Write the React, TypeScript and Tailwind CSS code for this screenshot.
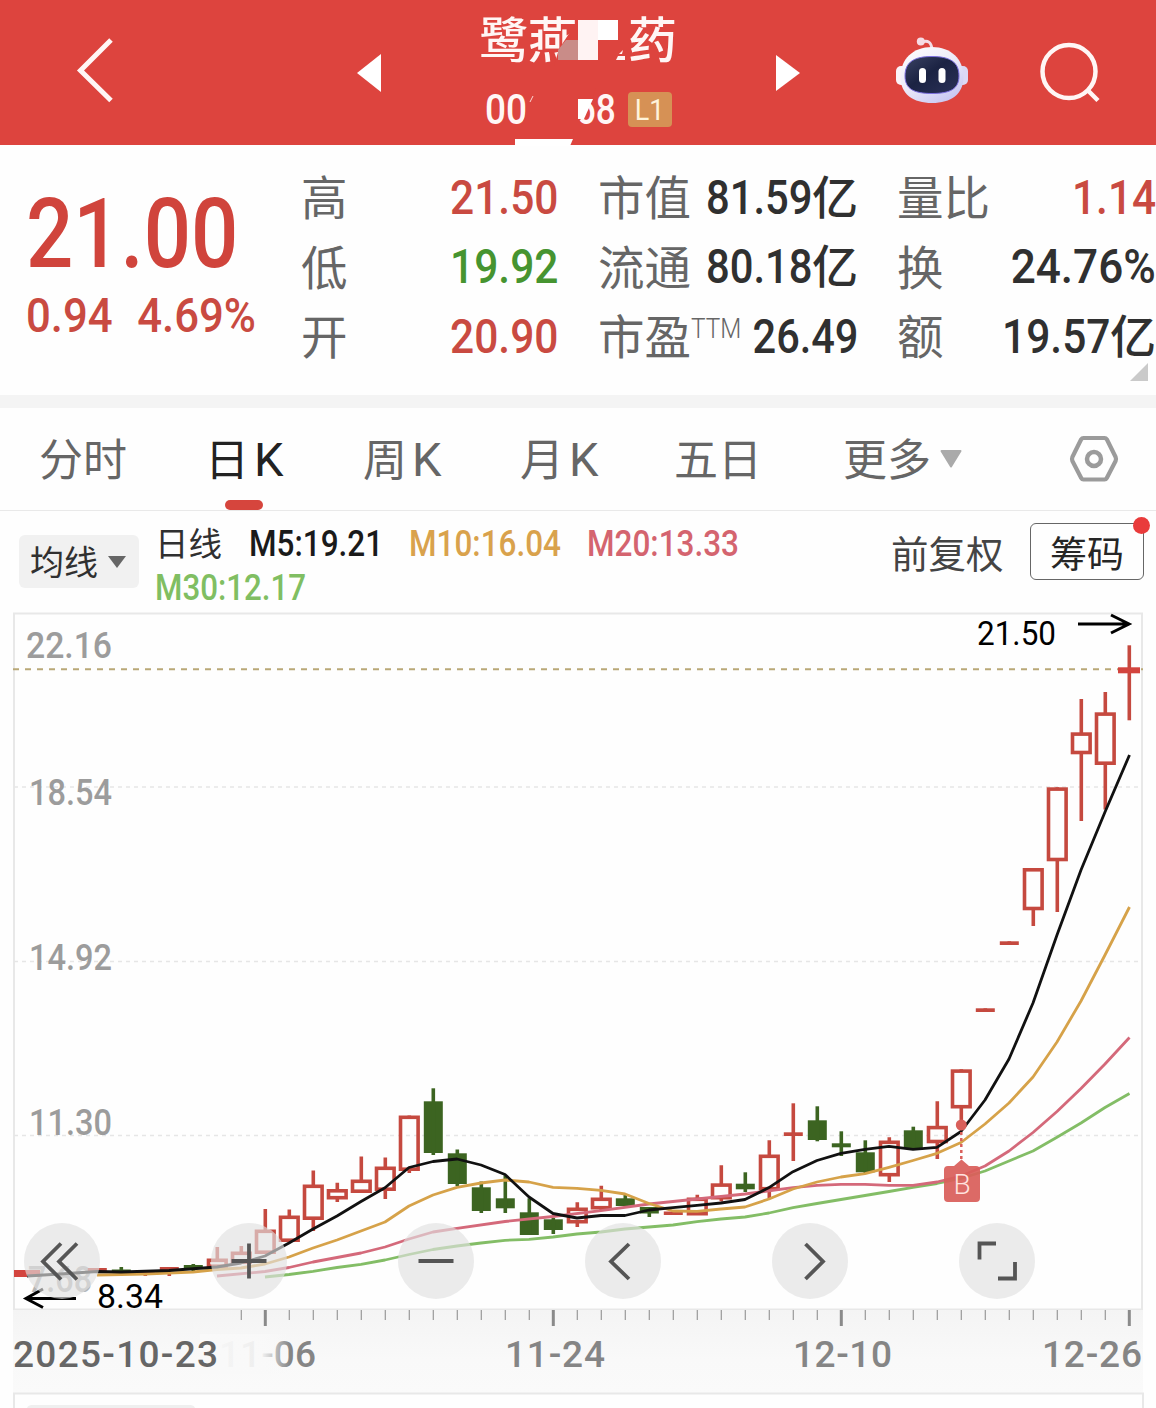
import { clsx } from 'clsx'

type Point = [number, number]

interface Candle {
  x: number
  top: number
  bottom: number
  high: number
  low: number
  up: boolean
}

const RED = '#c5493f'
const GREEN = '#3c6421'

const c = (x: number, top: number, bottom: number, high: number, low: number, up = true): Candle => ({
  x,
  top,
  bottom,
  high,
  low,
  up
})

const candles: Candle[] = [
  c(97.3, 1268, 1272, 1268, 1272),
  c(121.3, 1269.5, 1272.5, 1267, 1275, false),
  c(145.3, 1270, 1273, 1270, 1276),
  c(169.3, 1267, 1270.5, 1267, 1276),
  c(193.3, 1265, 1268, 1264, 1271, false),
  c(217.3, 1258.5, 1268, 1247, 1268),
  c(241.3, 1251.5, 1264, 1246, 1264),
  c(265.3, 1229.5, 1254, 1209, 1254),
  c(289.3, 1215.5, 1242, 1209.5, 1242),
  c(313.3, 1184.5, 1220, 1170.5, 1231),
  c(337.3, 1189, 1199.5, 1182.7, 1202),
  c(361.3, 1179.5, 1193, 1156.5, 1193),
  c(385.3, 1166.5, 1191, 1157.5, 1199),
  c(409.3, 1115.5, 1171, 1115.5, 1173),
  c(433.3, 1101.3, 1153, 1088.3, 1155, false),
  c(457.3, 1153.3, 1184, 1149.5, 1186, false),
  c(481.3, 1187.3, 1211, 1181.5, 1213, false),
  c(505.3, 1198.3, 1208.3, 1175.3, 1213, false),
  c(529.3, 1212.3, 1235, 1198.3, 1235, false),
  c(553.3, 1219.3, 1230, 1218, 1234, false),
  c(577.3, 1207.5, 1223.5, 1202.3, 1227),
  c(601.3, 1197.5, 1209.5, 1185.7, 1210),
  c(625.3, 1198.3, 1206, 1195, 1206, false),
  c(649.3, 1207, 1213.5, 1207, 1217, false),
  c(673.3, 1211.5, 1215, 1211.5, 1215),
  c(697.3, 1197.5, 1215.5, 1194.7, 1215),
  c(721.3, 1183.3, 1199.5, 1165.3, 1201.5),
  c(745.3, 1183.7, 1189.3, 1172.3, 1192, false),
  c(769.3, 1154.5, 1190.5, 1140.3, 1198),
  c(793.3, 1132.3, 1136, 1103.3, 1161),
  c(817.3, 1120.3, 1140, 1106.3, 1141.3, false),
  c(841.3, 1143.3, 1147.3, 1131.3, 1156, false),
  c(865.3, 1152.3, 1172.3, 1140.3, 1173, false),
  c(889.3, 1140.5, 1176.5, 1137.3, 1182),
  c(913.3, 1130.3, 1149, 1126.7, 1150, false),
  c(937.3, 1125.8, 1143.3, 1101.3, 1159),
  c(961.3, 1069.3, 1108.5, 1069.3, 1124),
  c(985.3, 1008.3, 1012, 1008.3, 1012),
  c(1009.3, 941.3, 945, 941.3, 945),
  c(1033.3, 868, 910.3, 868, 926),
  c(1057.3, 787.3, 861.3, 787.3, 912),
  c(1081.3, 732.3, 754.3, 699, 821),
  c(1105.3, 712.3, 765, 692, 809.5)
]

const ma5: Point[] = [
  [27, 1276], [60, 1274], [97, 1271.5], [121, 1272], [169, 1270.5], [217, 1267], [241, 1263], [265, 1256], [289, 1243],
  [313, 1229], [337, 1216], [361, 1201.5], [385, 1187.7], [409, 1167.5], [433, 1161.5], [457, 1159], [481, 1165],
  [505, 1174.5], [529, 1197], [553, 1213.5], [577, 1218], [601, 1215.5], [625, 1215.5], [649, 1210], [673, 1207.6],
  [697, 1205.3], [721, 1203], [745, 1199.5], [769, 1187.6], [793, 1171.7], [817, 1160.5], [841, 1153.3], [865, 1149.3],
  [889, 1146.3], [913, 1149.3], [937, 1147.3], [961, 1131.5], [985, 1100], [1009, 1059], [1033, 1003], [1057, 935],
  [1081, 870], [1105, 812], [1129.5, 755]
]

const ma10: Point[] = [
  [97, 1275], [145, 1274], [193, 1272], [217, 1269.5], [241, 1268], [265, 1264], [289, 1257], [313, 1248], [337, 1240],
  [361, 1231], [385, 1222], [409, 1206], [433, 1195], [457, 1187.3], [481, 1183], [505, 1180], [529, 1182],
  [553, 1187.3], [577, 1188.3], [601, 1190.3], [625, 1194], [649, 1203.5], [673, 1211], [697, 1211.3], [721, 1209],
  [745, 1207], [769, 1199], [793, 1189], [817, 1182], [841, 1177], [865, 1173.7], [889, 1167.3], [913, 1160.5],
  [937, 1153.3], [961, 1142.5], [985, 1124], [1009, 1103], [1033, 1077], [1057, 1042], [1081, 1001], [1105, 955],
  [1129.5, 907]
]

const ma20: Point[] = [
  [217, 1276], [265, 1271.5], [289, 1267.5], [313, 1262], [337, 1257.5], [361, 1253], [385, 1247], [409, 1239],
  [433, 1232], [457, 1228.3], [505, 1221.5], [553, 1216.5], [601, 1210.7], [649, 1204], [697, 1199], [745, 1194],
  [793, 1187.7], [817, 1185.3], [841, 1184.3], [865, 1184.3], [889, 1185.3], [913, 1185.3], [937, 1182], [961, 1176],
  [985, 1166], [1009, 1151], [1033, 1132.5], [1057, 1111.5], [1081, 1088.5], [1105, 1064], [1129.5, 1037.5]
]

const ma30: Point[] = [
  [265, 1277], [289, 1274.5], [313, 1271.3], [337, 1267.5], [361, 1264.3], [385, 1260], [409, 1254.5], [433, 1249.5],
  [457, 1246], [481, 1243], [505, 1240.3], [529, 1239.3], [553, 1237], [577, 1234], [601, 1232], [625, 1229],
  [649, 1227], [673, 1225], [697, 1221.7], [721, 1219], [745, 1217], [769, 1213], [793, 1207.7], [817, 1203.5],
  [841, 1199.5], [865, 1195.5], [889, 1191.5], [913, 1187.3], [937, 1183.5], [961, 1178.5], [985, 1171], [1009, 1161],
  [1033, 1151], [1057, 1137.3], [1081, 1123], [1105, 1107.5], [1129.5, 1093.5]
]

const toPoints = (points: Point[]) => points.map((p) => p.join(',')).join(' ')

const BackIcon = () => (
  <svg className="h-[72px] w-10" viewBox="0 0 40 72" fill="none" stroke="#fff6f5" strokeWidth="5">
    <path d="M36 6 5.500 36.500 36 66.500" />
  </svg>
)

const RobotIcon = () => (
  <svg className="h-[68px] w-[74px]" viewBox="0 0 74 68">
    <defs>
      <linearGradient id="shell" x1="0" y1="0" x2="0.7" y2="1">
        <stop offset="0" stopColor="#ffffff" />
        <stop offset="0.55" stopColor="#eceaf8" />
        <stop offset="1" stopColor="#c9c8f2" />
      </linearGradient>
      <linearGradient id="visor" x1="0" y1="0" x2="1" y2="1">
        <stop offset="0" stopColor="#3a4263" />
        <stop offset="0.45" stopColor="#1b2343" />
        <stop offset="1" stopColor="#2b3158" />
      </linearGradient>
    </defs>
    <path d="M27 6c6-2 9 0 10 7" fill="none" stroke="#f3dce6" strokeWidth="3" />
    <circle cx="25.800" cy="5.500" r="4" fill="#f6dbe4" />
    <rect x="1" y="30" width="12" height="19" rx="5" fill="#fbf3f8" />
    <rect x="61" y="30" width="12" height="19" rx="5" fill="#dcd8f4" />
    <path
      d="M37 11C56 11 68.500 23 68.500 41 68.500 58 56 67 37 67S5.500 58 5.500 41C5.500 23 18 11 37 11Z"
      fill="url(#shell)"
    />
    <path
      d="M37 20.500C55 20.500 64 26 64 40 64 53 55 57.500 37 57.500S10 53 10 40C10 26 19 20.500 37 20.500Z"
      fill="url(#visor)"
      stroke="#7c6fe0"
      strokeWidth="1"
    />
    <rect x="24" y="32" width="7" height="15" rx="3.500" fill="#fff" />
    <rect x="43.500" y="32" width="7" height="15" rx="3.500" fill="#fff" />
  </svg>
)

const SearchIcon = () => (
  <svg className="h-[64px] w-[64px]" viewBox="0 0 64 64" fill="none" stroke="#fff6f5" strokeWidth="4.500">
    <circle cx="31" cy="31.500" r="26.500" />
    <path d="m49.500 50 10.500 10.500" />
  </svg>
)

const SettingIcon = () => (
  <svg className="h-12 w-[52px]" viewBox="0 0 52 48" fill="none" stroke="#9b9b9b" strokeLinejoin="round">
    <path
      d="M15.500 3h21q1.500 0 2.300 1.300L47.600 22q.8 2 0 4L38.800 43q-.8 1.500-2.300 1.500h-21q-1.500 0-2.300-1.500L4.400 26q-.8-2 0-4L13.200 4.300Q14 3 15.500 3Z"
      strokeWidth="4.200"
    />
    <circle cx="26" cy="24" r="7" strokeWidth="4.500" />
  </svg>
)

const Header = () => (
  <header className="relative flex h-[145px] items-start bg-[#dd443e] text-[#fff6f5]">
    <button className="ml-[75px] mt-[34px]">
      <BackIcon />
    </button>
    <svg className="ml-[242px] mt-[54px] h-[38px] w-6" viewBox="0 0 24 38" fill="#fff">
      <path d="M0 19 24 0v38z" />
    </svg>
    <div className="ml-[98px] w-[200px]">
      <div className="flex h-[72px] justify-between pr-[2px] text-[49px] leading-[73px] font-medium">
        <span>鹭燕</span>
        <span>药</span>
      </div>
      <div className="mt-[13px] flex h-[50px] items-center pl-[6px] font-[Roboto] text-[42px] leading-[50px] font-medium">
        <span className="w-[46px] origin-left scale-x-[0.88]">00</span>
        <span className="ml-[38px] w-[42px] origin-right scale-x-[0.84] text-right">68</span>
        <span className="ml-[17px] mt-[-1px] flex h-[35px] w-11 shrink-0 items-center justify-center rounded-[4px] bg-[#d69155] text-[30px] font-normal text-[#fff3da]">
          <span className="mt-px scale-x-90">L1</span>
        </span>
      </div>
    </div>
    <svg className="ml-[97px] mt-[55px] h-9 w-6" viewBox="0 0 24 36" fill="#fff">
      <path d="M24 18 0 0v36z" />
    </svg>
    <button className="ml-[95px] mt-[36px]">
      <RobotIcon />
    </button>
    <button className="ml-[68.500px] mt-[40px]">
      <SearchIcon />
    </button>
    {/* mosaic over part of the name and the code */}
    <svg className="absolute left-[510px] top-0 h-[146px] w-[120px]" viewBox="510 0 120 146">
      <path d="M570 32h12v34h-28l5-17z" fill="#dd443e" />
      <path d="M558 60V50l8-10h12v20z" fill="#c98c88" />
      <path d="M578 20h20v40h-20z" fill="#fff3f3" />
      <path d="M598 20h20v20h-20z" fill="#fff" />
      <path d="m616 60 2-4h7v4zM619 54l4-4-1 4z" fill="#fff3f3" />
      <path d="M527 92h51v34h-57l4-9 2-10z" fill="#dd443e" />
      <path d="m530 102 3-6" stroke="#fbd5d2" />
      <path d="M576 88h20l-5 14-7 14-8 8z" fill="#dd443e" />
      <path d="M578 99h15l-9 20h-6z" fill="#fff" />
      <path d="M515 139h58l-3 7h-55z" fill="#fff" />
    </svg>
  </header>
)

interface StatProps {
  label: string
  sup?: string
  value: string
  unit?: string
  color?: string
  stretch?: string
}

const Stat = ({ label, sup, value, unit, color = 'text-[#303030]', stretch = 'scale-x-[0.885]' }: StatProps) => (
  <div className="flex h-[69.500px] items-center justify-between">
    <span className="mt-[-5px] flex text-[46.500px] text-[#666]">
      {label}
      {sup && (
        <span className="w-[50px] origin-left scale-x-[0.9] font-[Roboto] text-[27px] leading-[61px] font-light">
          {sup}
        </span>
      )}
    </span>
    <span className={clsx('flex items-center whitespace-nowrap', color)}>
      <span className={clsx('-ml-4 origin-right font-[Roboto] text-[48px] font-medium', stretch)}>{value}</span>
      {unit && <span className="mt-[-7px] text-[46px] font-medium">{unit}</span>}
    </span>
  </div>
)

const Quote = () => (
  <section className="relative flex h-[250px] pt-[18px]">
    <div className="w-[301px] pl-[26px] text-[#d0443c]">
      <div className="mt-[15px] h-[112px] origin-left scale-x-[0.867] font-[Roboto] text-[96px] leading-[112px] font-medium">
        21.00
      </div>
      <div className="mt-[-2px] flex h-14 origin-left scale-x-[0.91] gap-[27px] font-[Roboto] text-[48px] leading-[56px] font-medium text-[#c94a41]">
        <span>0.94</span>
        <span>4.69%</span>
      </div>
    </div>
    <div className="w-[257px]">
      <Stat label="高" value="21.50" color="text-[#c94a41]" />
      <Stat label="低" value="19.92" color="text-[#469430]" />
      <Stat label="开" value="20.90" color="text-[#c94a41]" />
    </div>
    <div className="ml-10 w-[260px]">
      <Stat label="市值" value="81.59" unit="亿" stretch="scale-x-[0.87]" />
      <Stat label="流通" value="80.18" unit="亿" stretch="scale-x-[0.87]" />
      <Stat label="市盈" sup="TTM" value="26.49" stretch="scale-x-[0.865]" />
    </div>
    <div className="ml-[39px] w-[259px]">
      <Stat label="量比" value="1.14" color="text-[#c94a41]" />
      <Stat label="换" value="24.76%" stretch="scale-x-[0.92]" />
      <Stat label="额" value="19.57" unit="亿" />
    </div>
    <svg className="absolute right-2 top-[218px] h-[18px] w-[18px]" viewBox="0 0 18 18" fill="#cacaca">
      <path d="M18 0v18H0z" />
    </svg>
  </section>
)

const tabs = [
  { label: '分时', width: 'w-[166px]' },
  { label: '日K', width: 'w-[158px]', active: true },
  { label: '周K', width: 'w-[157px]' },
  { label: '月K', width: 'w-[154px]' },
  { label: '五日', width: 'w-[169px]' },
  { label: '更多', width: 'w-[97px]' }
]

const Tabs = () => (
  <nav className="flex h-[103px] items-center border-b border-[#e9e9e9] pl-[39px]">
    {tabs.map(({ label, width, active }) => (
      <div
        key={label}
        className={clsx(
          'relative h-full shrink-0 text-[44px] leading-[98px]',
          width,
          active ? 'text-[#222]' : 'text-[#666]'
        )}
      >
        {label.replace('K', '')}
        {label.endsWith('K') && <span className="ml-[5px] font-[Roboto] text-[47px]">K</span>}
        {active && <span className="absolute bottom-0 left-[20px] h-[10px] w-[38px] rounded-full bg-[#d6453d]" />}
      </div>
    ))}
    <svg className="h-[18px] w-[22px]" viewBox="0 0 22 18" fill="#aaa" stroke="#aaa" strokeWidth="2" strokeLinejoin="round">
      <path d="M1.500 1h19L11 16.500z" />
    </svg>
    <div className="ml-[106px]">
      <SettingIcon />
    </div>
  </nav>
)

const averages = [
  { text: 'M5:19.21', width: 'w-[160px]', color: 'text-[#1a1a1a]' },
  { text: 'M10:16.04', width: 'w-[178px]', color: 'text-[#d9a24c]' },
  { text: 'M20:13.33', width: 'w-[160px]', color: 'text-[#d4646f]' }
]

const Indicators = () => (
  <section className="flex h-[101px] items-start pl-[19px]">
    <button className="mt-6 flex h-[53px] w-[120px] items-center rounded-md bg-[#f1f1f1] pl-[11px] text-[34px] text-[#303030]">
      <span className="mt-[-3px]">均线</span>
      <svg className="ml-[10px] h-3 w-[18px]" viewBox="0 0 18 12" fill="#666">
        <path d="M0 0h18L9 12z" />
      </svg>
    </button>
    <div className="ml-[16px] mt-[11px] w-[610px] font-[Roboto] text-[36px] leading-[44px] font-medium">
      <div className="flex h-[44px] items-center">
        <span className="mt-[-5px] w-[94px] font-['Noto_Sans_CJK_SC'] text-[33.500px] font-normal text-[#303030]">
          日线
        </span>
        {averages.map(({ text, width, color }) => (
          <div key={text} className={clsx('shrink-0 whitespace-nowrap', width, color)}>
            <span className="inline-block origin-left scale-x-[0.875]">{text}</span>
          </div>
        ))}
      </div>
      <div className="origin-left scale-x-[0.87] text-[#80be62]">M30:12.17</div>
    </div>
    <span className="ml-[126px] mt-[12px] w-[139px] text-[37.500px] leading-[57px] text-[#444]">前复权</span>
    <button className="relative mt-[12px] h-[57px] w-[114px] shrink-0 rounded-md border border-[#666] text-[37px] leading-[52px] text-[#262626]">
      筹码
      <span className="absolute -right-[7px] -top-[7px] h-[17px] w-[17px] rounded-full bg-[#e93b3b]" />
    </button>
  </section>
)

const CandleShape = ({ x, top, bottom, high, low, up }: Candle) => {
  const flat = bottom - top < 6
  if (!up || flat) {
    return (
      <g fill={up ? RED : GREEN}>
        <rect x={x - 9.5} y={top} width={19} height={bottom - top} />
        <rect x={x - 1.8} y={high} width={3.6} height={low - high} />
      </g>
    )
  }
  return (
    <g stroke={RED} strokeWidth={3.6} fill="none">
      <path d={`M${x} ${high}V${top + 1}M${x} ${bottom - 1}V${low}`} />
      <rect x={x - 8.8} y={top + 1.8} width={17.6} height={bottom - top - 3.6} />
    </g>
  )
}

const axisLabels = [
  { text: '22.16', x: 26, y: 657.5 },
  { text: '18.54', x: 29, y: 804.5 },
  { text: '14.92', x: 29, y: 970 },
  { text: '11.30', x: 29, y: 1135 }
]

const Chart = () => (
  <svg className="block h-[698px] w-full overflow-visible font-[Roboto]" viewBox="0 612 1156 698">
    <rect x="14" y="613.500" width="1128" height="696" fill="none" stroke="#e8e8e8" strokeWidth="2" />
    <g stroke="#e6e6e6" strokeWidth="1.500" strokeDasharray="4 4">
      <path d="M14 787h1128M14 961.500h1128M14 1135.500h1128" />
    </g>
    <path d="M13 669.300h1130" stroke="#b9a877" strokeWidth="2" strokeDasharray="6 6" />
    <g fontSize="36" fontWeight="500" fill="#9c9c9c">
      {axisLabels.map(({ text, x, y }) => (
        <text key={text} x={x} y={y} textLength={x === 26 ? 86 : 83} lengthAdjust="spacingAndGlyphs">
          {text}
        </text>
      ))}
      <text x="28" y="1292" fill="#b4b4b4" textLength="64" lengthAdjust="spacingAndGlyphs">7.68</text>
    </g>
    <rect x="14" y="1270" width="26" height="7" fill="#d3443e" />
    {candles.map((candle) => (
      <CandleShape key={candle.x} {...candle} />
    ))}
    <g fill={RED}>
      <rect x="1127.500" y="645.300" width="3.600" height="75" />
      <rect x="1118" y="667.300" width="22" height="6" fill="#d3443e" />
    </g>
    <g fill="none" strokeWidth="2.800" strokeLinejoin="round">
      <polyline points={toPoints(ma30)} stroke="#83bd66" />
      <polyline points={toPoints(ma20)} stroke="#d4697a" />
      <polyline points={toPoints(ma10)} stroke="#d6a249" />
      <polyline points={toPoints(ma5)} stroke="#111" />
    </g>
    <g fill="#d95f5a">
      <circle cx="961.300" cy="1125" r="5.500" />
      <path d="M961.300 1132v30" stroke="#d95f5a" strokeWidth="2.500" strokeDasharray="3 3" />
      <path d="M948 1166h6l7.500-6.500 7.500 6.500h7q4 0 4 4v28q0 4-4 4h-28q-4 0-4-4v-28q0-4 4-4z" opacity="0.93" />
      <text x="962" y="1194" fontSize="28" fill="#ffe3df" textAnchor="middle" fontWeight="300">B</text>
    </g>
    <g fill="none" stroke="#000" strokeWidth="3">
      <path d="M1078 624h51M1111 615l18 9-18 9" />
      <path d="M76 1298.500H26M43 1289l-17 9.500 17 9" />
    </g>
    <g fontSize="33" fill="#000">
      <text x="977" y="645" textLength="79" lengthAdjust="spacingAndGlyphs">21.50</text>
      <text x="97" y="1307.500" textLength="66" lengthAdjust="spacingAndGlyphs">8.34</text>
    </g>
  </svg>
)

const controls = [
  { name: 'first', path: 'M61 1243l-18 18 18 18M77 1243l-18 18 18 18', left: 62 },
  { name: 'zoom-in', path: 'M231.500 1260.500h35M249 1243v35', left: 249 },
  { name: 'zoom-out', path: 'M418.500 1260.500h35', left: 436 },
  { name: 'prev', path: 'M629 1243.500l-18 17.500 18 17.500', left: 623 },
  { name: 'next', path: 'M805.500 1243.500l17.500 17.500-17.500 17.500', left: 810 },
  { name: 'fullscreen', path: 'M979.500 1259v-16h16.500M998 1278h17v-16.500', left: 997 }
]

const Controls = () => (
  <div className="absolute left-6 top-[610.500px] flex gap-[111px]">
    {controls.map(({ name, path, left }) => (
      <button key={name} className="h-[76px] w-[76px] rounded-full bg-[#e0e0e0]/65">
        <svg viewBox={`${left - 38} 1222.500 76 76`} fill="none" stroke="#555" strokeWidth="3.800">
          <path d={path} />
        </svg>
      </button>
    ))}
  </div>
)

const ticks = Array.from({ length: 38 }, (_, i) => ({ x: 241.3 + i * 24, major: (i - 1) % 12 === 0 }))

const dates = [
  { text: '11-06', x: 219, length: 97 },
  { text: '11-24', x: 505, length: 100 },
  { text: '12-10', x: 793, length: 99 },
  { text: '12-26', x: 1042, length: 100 }
]

const TimeAxis = () => (
  <svg className="block h-[98px] w-full font-[Roboto]" viewBox="0 1310 1156 98">
    <defs>
      <linearGradient id="band" x1="0" y1="0" x2="0" y2="1">
        <stop offset="0" stopColor="#f4f4f4" />
        <stop offset="0.6" stopColor="#f9f9f9" />
        <stop offset="1" stopColor="#fafafa" />
      </linearGradient>
      <linearGradient id="fade" x1="0" y1="0" x2="1" y2="0">
        <stop offset="0" stopColor="#f9f9f9" />
        <stop offset="0.7" stopColor="#f9f9f9" stopOpacity="0.9" />
        <stop offset="1" stopColor="#f8f8f8" stopOpacity="0" />
      </linearGradient>
    </defs>
    <rect x="13" y="1310" width="1130" height="84" fill="url(#band)" />
    {ticks.map(({ x, major }) => (
      <path key={x} d={`M${x} 1310v${major ? 16 : 10}`} stroke={major ? '#8a8a8a' : '#999'} strokeWidth={major ? 3 : 1.2} />
    ))}
    <g fontSize="37" fill="#858585" fontWeight="500">
      {dates.map(({ text, x, length }) => (
        <text key={text} x={x} y="1366.500" textLength={length} lengthAdjust="spacing">
          {text}
        </text>
      ))}
      <rect x="200" y="1334" width="90" height="40" fill="url(#fade)" />
      <text x="13" y="1366.500" fill="#666" textLength="205" lengthAdjust="spacing">2025-10-23</text>
    </g>
    <path d="M14 1408v-14.500h1129V1408" fill="none" stroke="#e8e8e8" strokeWidth="2" />
    <path d="M27 1408q1-3 5-3h158q4 0 5 3z" fill="#efefef" />
  </svg>
)

export default function App() {
  return (
    <div className="h-[1408px] w-[1156px] overflow-hidden bg-[#fefefe] font-['Noto_Sans_CJK_SC',sans-serif]">
      <Header />
      <Quote />
      <div className="h-[13px] bg-[#f4f4f4]" />
      <Tabs />
      <Indicators />
      <div className="relative">
        <Chart />
        <TimeAxis />
        <Controls />
      </div>
    </div>
  )
}
